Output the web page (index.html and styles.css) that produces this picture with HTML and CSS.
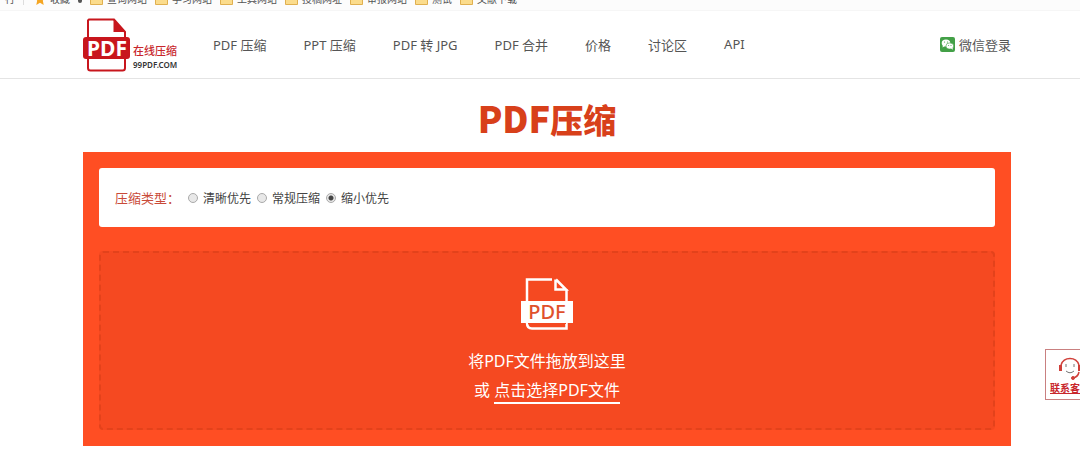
FILE: index.html
```html
<!DOCTYPE html>
<html lang="zh-CN">
<head>
	<meta charset="utf-8">
	<title>PDF压缩</title>
	<link rel="stylesheet" href="styles.css">
</head>
<body>
	<svg class="defs" aria-hidden="true">
		<symbol id="folder" viewBox="0 0 13 12">
			<path d="M.5 1.500h5l1 1.500h6v8.500h-12z" fill="#fbdc8c" stroke="#e0b050"/>
		</symbol>
	</svg>

	<div class="bookmarks">
		<span class="tool">行</span>
		<span class="line"></span>
		<a class="fav" href="#">
			<svg width="12" height="12" viewBox="0 0 12 12"><path d="M6 0l1.800 4 4.200.5-3.200 3 .9 4.500L6 9.800 2.300 12l.9-4.500L0 4.500 4.200 4z" fill="#f5a623"/></svg>
			收藏
		</a>
		<span class="caret"></span>
		<a href="#"><svg class="folder"><use href="#folder"/></svg>查询网站</a>
		<a href="#"><svg class="folder"><use href="#folder"/></svg>学习网站</a>
		<a href="#"><svg class="folder"><use href="#folder"/></svg>工具网站</a>
		<a href="#"><svg class="folder"><use href="#folder"/></svg>投稿网址</a>
		<a href="#"><svg class="folder"><use href="#folder"/></svg>审报网站</a>
		<a href="#"><svg class="folder"><use href="#folder"/></svg>测试</a>
		<a href="#"><svg class="folder"><use href="#folder"/></svg>文献下载</a>
	</div>

	<header class="header">
		<a class="logo" href="#">
			<svg width="48" height="54" viewBox="0 0 48 54">
				<path d="M6 1.500h25l11 12.500v36q0 2.500-2.500 2.500h-32Q5 52.500 5 50V2.500z" fill="#fff" stroke="#c8161d" stroke-width="2"/>
				<path d="M30.500 1.500V14H42z" fill="#c8161d"/>
				<rect x="0" y="19" width="47" height="22" rx="3" fill="#c8161d"/>
				<text x="24" y="38" text-anchor="middle" class="logo-pdf">PDF</text>
			</svg>
			<span class="logo-text">
				<strong>在线压缩</strong>
				<small>99PDF.COM</small>
			</span>
		</a>
		<nav class="nav">
			<a href="#">PDF 压缩</a>
			<a href="#">PPT 压缩</a>
			<a href="#">PDF 转 JPG</a>
			<a href="#">PDF 合并</a>
			<a href="#">价格</a>
			<a href="#">讨论区</a>
			<a href="#">API</a>
		</nav>
		<a class="login" href="#">
			<svg width="15" height="15" viewBox="0 0 15 15">
				<rect width="15" height="15" rx="2" fill="#43a047"/>
				<ellipse cx="6" cy="6" rx="4.300" ry="3.500" fill="#fff"/>
				<path d="M3 8l-.5 2.500L5 9z" fill="#fff"/>
				<ellipse cx="9.800" cy="9" rx="3.900" ry="3.100" fill="#fff" stroke="#43a047" stroke-width=".6"/>
				<path d="M11 11.500l1.800 1.300-.3-2.300z" fill="#fff"/>
				<g fill="#43a047"><circle cx="4.500" cy="5" r=".6"/><circle cx="7.500" cy="5" r=".6"/><circle cx="8.600" cy="8.500" r=".5"/><circle cx="11" cy="8.500" r=".5"/></g>
			</svg>
			微信登录
		</a>
	</header>

	<main class="main">
		<h1><span>PDF</span>压缩</h1>
		<div class="panel">
			<form class="options">
				<span class="options-title" id="type">压缩类型：</span>
				<div class="radios" role="radiogroup" aria-labelledby="type">
					<label><input type="radio" name="type">清晰优先</label>
					<label><input type="radio" name="type">常规压缩</label>
					<label><input type="radio" name="type" checked>缩小优先</label>
				</div>
			</form>
			<div class="drop">
				<svg width="54" height="54" viewBox="0 0 54 54">
					<g fill="none" stroke="#fff" stroke-width="2.500">
						<path d="M7 25V2.500h25"/>
						<path d="M35.500 2.500v10H46L36 2.500M46.500 12v13"/>
						<path d="M7 46q0 5.500 5 5.500h34.500V46"/>
					</g>
					<path d="M1 24h52v22H1z" fill="#fff"/>
					<path d="M8 46.500h38" stroke="#f54921"/>
					<text x="27" y="42" text-anchor="middle" class="drop-pdf">PDF</text>
				</svg>
				<p>将PDF文件拖放到这里</p>
				<p>或 <a href="#">点击选择PDF文件</a></p>
			</div>
		</div>
	</main>

	<a class="service" href="#">
		<svg width="26" height="26" viewBox="0 0 26 26" fill="none" stroke="#d0403a">
			<path d="M4 10a9.500 9.500 0 0 1 18 0" stroke-width="1.500"/>
			<path d="M3.500 10v6M22.500 10v6" stroke-width="3"/>
			<path d="M22 17q-1 5-6 6" stroke-width="1.500"/>
			<path d="M9 16q4 3.500 8 0" stroke="#777"/>
			<path d="M9 9v3M17 9v3" stroke="#777"/>
			<circle cx="16" cy="23" r="1.500" fill="#d0403a"/>
		</svg>
		联系客服
	</a>
</body>
</html>
```

FILE: styles.css
```css
* {
	box-sizing: border-box;
}

body {
	margin: 0;
	background: #fff;
	color: #555;
	font-family: "Noto Sans", "Noto Sans CJK SC", sans-serif;
	font-size: 13px;
}

a {
	color: inherit;
	text-decoration: none;
}

.defs {
	position: absolute;
	width: 0;
	height: 0;
}

/* bookmarks */
.bookmarks {
	display: flex;
	align-items: flex-end;
	gap: 8px;
	height: 11px;
	padding: 0 5px 5px;
	overflow: hidden;
	background: #fcfcfc;
	border-bottom: 1px solid #f6f6f6;
	font-size: 10px;
	line-height: 12px;
	white-space: nowrap;
}

.bookmarks a {
	display: flex;
	align-items: center;
	gap: 4px;
}

.bookmarks .line {
	width: 1px;
	height: 12px;
	background: #ddd;
}

.bookmarks .fav {
	margin-left: 2px;
}

.bookmarks .caret {
	width: 4px;
	height: 4px;
	margin-bottom: 2px;
	background: #555;
	border-radius: 0 0 2px 2px;
}

.folder {
	width: 13px;
	height: 12px;
}

/* header */
.header {
	display: flex;
	align-items: center;
	height: 68px;
	padding: 0 69px 0 83px;
	border-bottom: 1px solid #e4e4e4;
}

.logo {
	display: flex;
	align-items: flex-end;
	gap: 2px;
	width: 130px;
}

.logo-pdf {
	fill: #fff;
	font: bold 21px "Noto Sans", sans-serif;
}

.logo-text {
	display: flex;
	flex-direction: column;
}

.logo-text strong {
	color: #c8262b;
	font-size: 11px;
	font-weight: 500;
	line-height: 15px;
}

.logo-text small {
	color: #333;
	font-size: 8px;
	font-weight: 600;
	line-height: 14px;
}

.nav {
	display: flex;
	flex: 1;
	gap: 37px;
	white-space: nowrap;
}

.login {
	display: flex;
	align-items: center;
	gap: 4px;
	white-space: nowrap;
}

/* main */
.main {
	padding: 0 69px 20px 83px;
}

h1 {
	margin: 0;
	padding: 16px 0 9px;
	color: #d8401a;
	font-family: "Noto Sans CJK SC", sans-serif;
	font-size: 33px;
	font-weight: 900;
	line-height: 48px;
	text-align: center;
}

h1 span {
	font-size: 36px;
	line-height: 36px;
}

.panel {
	padding: 16px;
	background: #ff4e23;
}

.options {
	display: flex;
	align-items: center;
	gap: 8px;
	min-height: 59px;
	padding: 0 16px;
	background: #fff;
	border-radius: 3px;
}

.options-title {
	color: #c94a38;
}

.radios {
	display: flex;
	gap: 6px;
	color: #444;
	font-size: 12px;
}

.radios label {
	display: flex;
	align-items: center;
	gap: 5px;
}

.radios input {
	appearance: none;
	width: 10px;
	height: 10px;
	margin: 0;
	background: #e8e8e8;
	border: 1px solid #aaa;
	border-radius: 50%;
}

.radios input:checked {
	background: radial-gradient(circle, #444 2px, #e8e8e8 3px);
}

.drop {
	display: flex;
	flex-direction: column;
	align-items: center;
	margin-top: 24px;
	padding: 24px 0;
	background: #f54921;
	border: 2px dashed #e3421b;
	border-radius: 4px;
	color: #fff;
	font-size: 16px;
	line-height: 23px;
}

.drop svg {
	margin-bottom: 19px;
}

.drop-pdf {
	fill: #e0502c;
	font: 500 20px "Noto Sans", sans-serif;
}

.drop p {
	margin: 6px 0 0;
}

.drop p:nth-of-type(1) {
	margin-top: 0;
}

.drop a {
	display: inline-block;
	border-bottom: 2px solid #fff;
}

/* customer service, hangs over the right edge */
.service {
	position: fixed;
	top: 349px;
	right: -15px;
	display: flex;
	flex-direction: column;
	align-items: center;
	width: 50px;
	padding: 5px 0 3px;
	background: #fff;
	border: 1px solid #c98080;
	color: #c8262b;
	font-size: 10px;
	font-weight: bold;
	line-height: 15px;
	text-decoration: underline;
}
```
